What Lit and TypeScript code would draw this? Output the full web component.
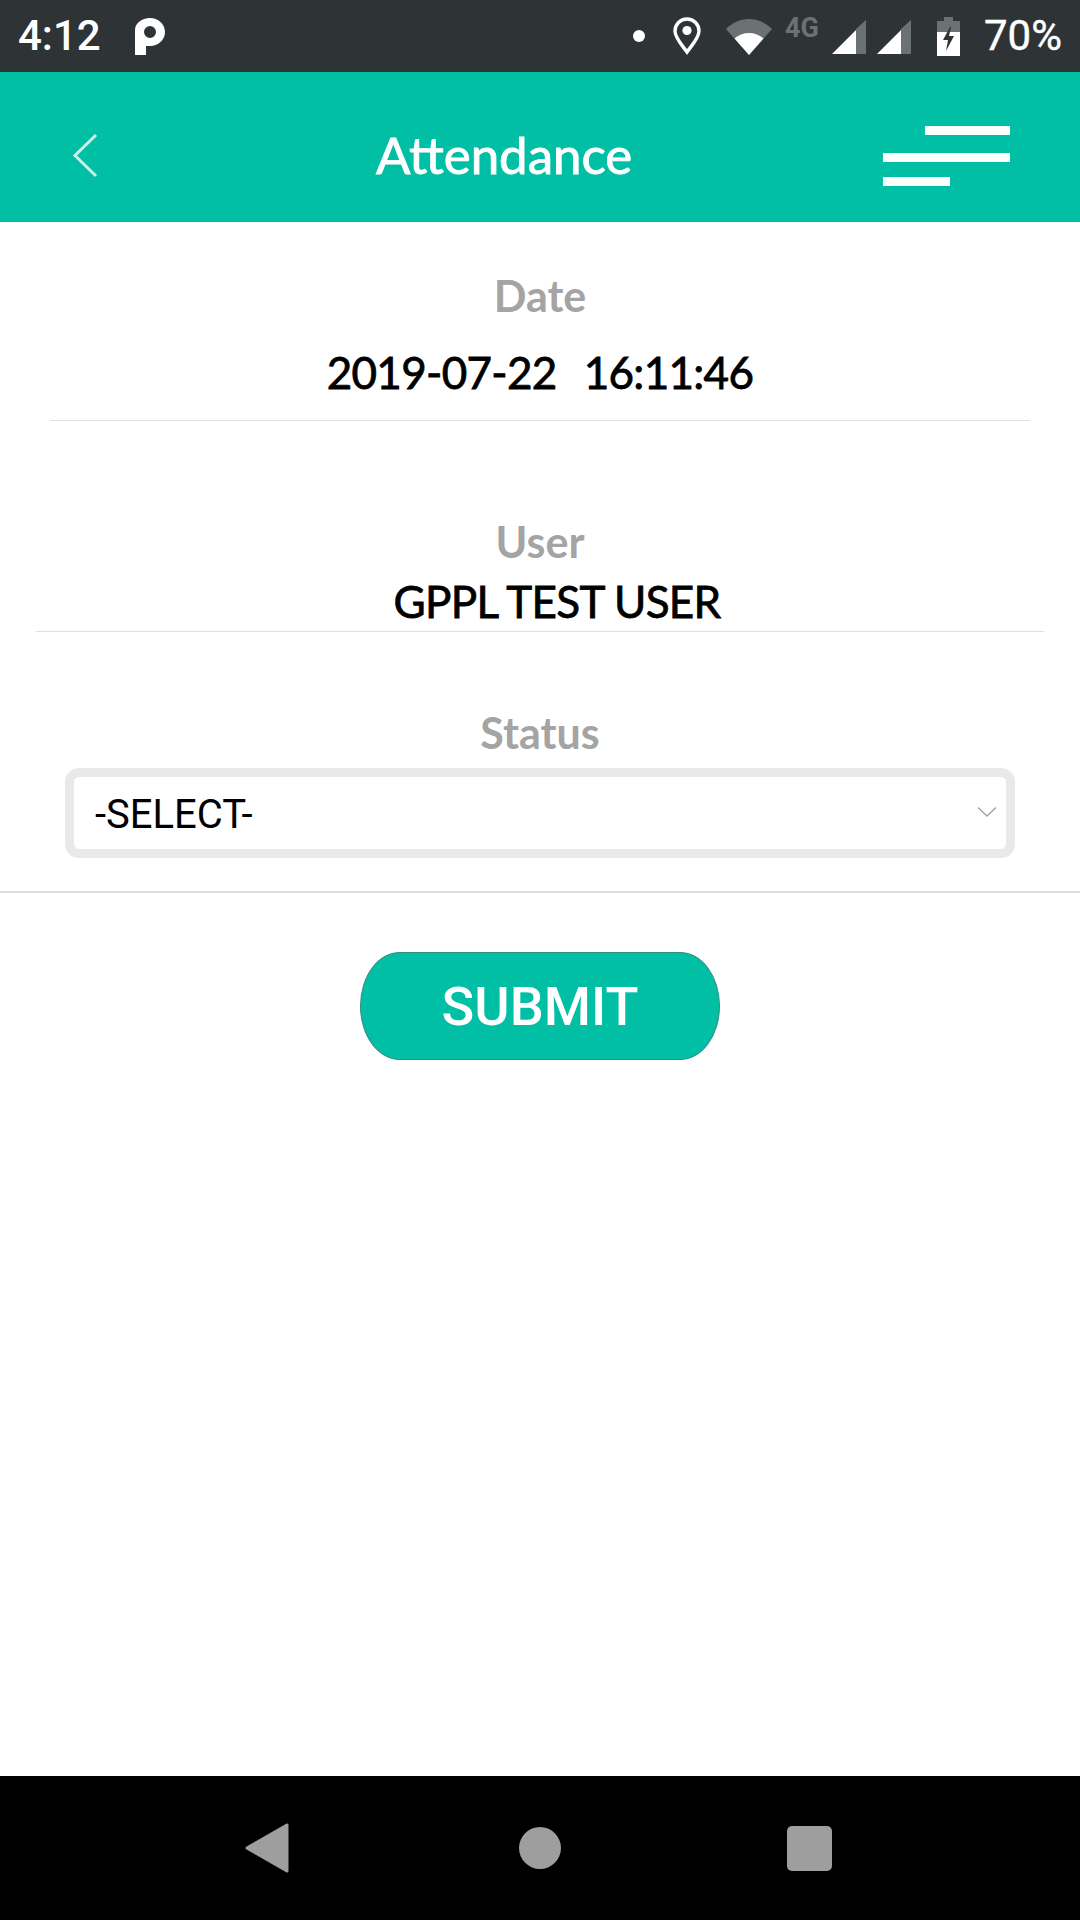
import { LitElement, html, css } from "lit";
import { customElement } from "lit/decorators.js";

@customElement("app-root")
export class AppRoot extends LitElement {
  static styles = css`
    :host { display: flex; flex-direction: column; width: 1080px; height: 1920px; background: #fff; font-family: Lato, sans-serif; overflow: hidden; }
    .status { height: 72px; flex: none; background: #2e3436; display: flex; align-items: center; color: #fff; font-family: Roboto, sans-serif; font-weight: 500; font-size: 42px; line-height: 72px; }
    .status svg { display: block; flex: none; }
    .time { margin-left: 18px; width: 116px; }
    .pct { margin-left: 24px; font-weight: 400; -webkit-text-stroke: 0.4px #fff; }
    .right { margin-left: auto; padding-right: 18px; display: flex; align-items: center; }
    .dot { width: 12px; height: 12px; border-radius: 50%; background: #fff; margin-right: 28px; }
    .four { font-size: 27px; font-weight: 700; color: #6c7274; line-height: 27px; margin: -16px 6px 0 13px; width: 41px; }
    .header { height: 150px; box-sizing: border-box; padding-top: 17px; flex: none; background: #00bfa5; display: flex; align-items: center; color: #fff; }
    .header .back { margin-left: 71px; display: block; }
    .title { margin-left: 278px; margin-top: -2px; font-size: 51px; font-weight: 400; line-height: 60px; -webkit-text-stroke: 0.9px #fff; }
    .menu { margin-left: auto; margin-right: 70px; width: 127px; display: flex; flex-direction: column; align-items: flex-end; }
    .menu i { display: block; height: 9px; background: #fff; }
    .menu .a { width: 85px; }
    .menu .b { width: 127px; margin-top: 18px; }
    .menu .c { width: 67px; margin-top: 15px; align-self: flex-start; }
    .main { flex: 1; display: flex; flex-direction: column; }
    .label { text-align: center; color: #a4a4a4; font-size: 43px; font-weight: 700; line-height: 60px; }
    .value { text-align: center; color: #000; font-size: 44px; font-weight: 400; line-height: 50px; white-space: pre; letter-spacing: -0.7px; -webkit-text-stroke: 0.8px #000; }
    .rule { height: 1px; background: #e0e0e0; }
    .date { margin-top: 44px; }
    .date .value { margin-top: 21px; word-spacing: 3px; }
    .date .rule { margin: 23px 50px 0; }
    .user { margin-top: 91px; }
    .user .value { margin-top: 4px; padding-left: 34px; }
    .user .rule { margin: 5px 36px 0; }
    .status-f { margin-top: 71px; }
    .select { margin: 5px 65px 0; height: 90px; box-sizing: border-box; border: 9px solid #e9e9e9; border-radius: 14px; background: #fff; display: flex; align-items: center; justify-content: space-between; padding: 2px 9px 0 21px; font-family: Roboto, sans-serif; font-size: 40px; color: #000; }
    .select svg { margin-top: -4px; }
    .divider { height: 2px; background: #dedede; margin-top: 33px; }
    .submit { align-self: center; margin-top: 59px; width: 360px; height: 108px; box-sizing: border-box; background: #00bfa5; border: 1px solid #2f8f80; border-radius: 40px / 54px; color: #fff; font-family: Roboto, sans-serif; font-size: 54px; font-weight: 500; display: flex; align-items: center; justify-content: center; }
    .nav { height: 144px; flex: none; background: #000; display: flex; align-items: center; position: relative; }
    .nav svg { display: block; flex: none; }
    .tri { margin-left: 245px; }
    .circle { margin-left: 230px; width: 42px; height: 42px; border-radius: 50%; background: #9e9e9e; }
    .square { margin-left: 226px; width: 45px; height: 45px; border-radius: 5px; background: #9e9e9e; }
  `;

  render() {
    return html`
      <div class="status">
        <span class="time">4:12</span>
        <svg width="32" height="38" viewBox="0 0 32 38"><path fill="#fff" fill-rule="evenodd" d="M1 13C1 6 8 1 16 1s15 6 15 14-7 14-15 14h-4v9H1V13zm15-4a6 6 0 1 0 0 12 6 6 0 0 0 0-12z"/></svg>
        <div class="right">
          <span class="dot"></span>
          <svg width="28" height="38" viewBox="0 0 28 38" style="margin-right:25px"><path fill="none" stroke="#fff" stroke-width="3.4" d="M14 35C9 28 2 21 2 14a12 12 0 0 1 24 0c0 7-7 14-12 21z"/><circle cx="14" cy="13.500" r="4.600" fill="#fff"/></svg>
          <svg width="46" height="37" viewBox="0 0 46 37"><path fill="#6c7274" d="M0 11C6 5 14 1 23 1s17 4 23 10L23 37z"/><path fill="#fff" d="M8.500 20.500C12.500 17 17.500 15 23 15s10.500 2 14.500 5.500L23 37z"/></svg>
          <span class="four">4G</span>
          <svg width="34" height="34" viewBox="0 0 34 34" style="margin-top:2px"><path fill="#6c7274" d="M24 9 34 0v34H24z"/><path fill="#fff" d="M0 34 24 10v24z"/></svg>
          <svg width="34" height="34" viewBox="0 0 34 34" style="margin:2px 0 0 11px"><path fill="#6c7274" d="M24 9 34 0v34H24z"/><path fill="#fff" d="M0 34 24 10v24z"/></svg>
          <svg width="23" height="39" viewBox="0 0 23 39" style="margin-left:26px"><path fill="#6c7274" d="M7 0h9v4h7v14H0V4h7z"/><path fill="#fff" d="M0 15h23v24H0z"/><path fill="#2e3436" d="M13 10 6 23h5l-2 11 8-15h-5l2-9z"/></svg>
          <span class="pct">70%</span>
        </div>
      </div>
      <div class="header">
        <svg class="back" width="27" height="45" viewBox="0 0 27 45"><path fill="none" stroke="#c8f1ea" stroke-width="3" d="M25 2 4 22.500 25 43"/></svg>
        <span class="title">Attendance</span>
        <div class="menu"><i class="a"></i><i class="b"></i><i class="c"></i></div>
      </div>
      <div class="main">
        <div class="date">
          <div class="label">Date</div>
          <div class="value">2019-07-22  16:11:46</div>
          <div class="rule"></div>
        </div>
        <div class="user">
          <div class="label">User</div>
          <div class="value">GPPL TEST USER</div>
          <div class="rule"></div>
        </div>
        <div class="status-f">
          <div class="label">Status</div>
          <div class="select">
            <span>-SELECT-</span>
            <svg width="20" height="12" viewBox="0 0 20 12"><path fill="none" stroke="#a0a0a0" stroke-width="1.300" d="M1 1.500 10 10l9-8.500"/></svg>
          </div>
        </div>
        <div class="divider"></div>
        <div class="submit">SUBMIT</div>
      </div>
      <div class="nav">
        <svg class="tri" width="44" height="50" viewBox="0 0 44 50"><path fill="#9e9e9e" stroke="#9e9e9e" stroke-width="3" stroke-linejoin="round" d="M2 25 42 2v46z" /></svg>
        <span class="circle"></span>
        <span class="square"></span>
      </div>
    `;
  }
}
